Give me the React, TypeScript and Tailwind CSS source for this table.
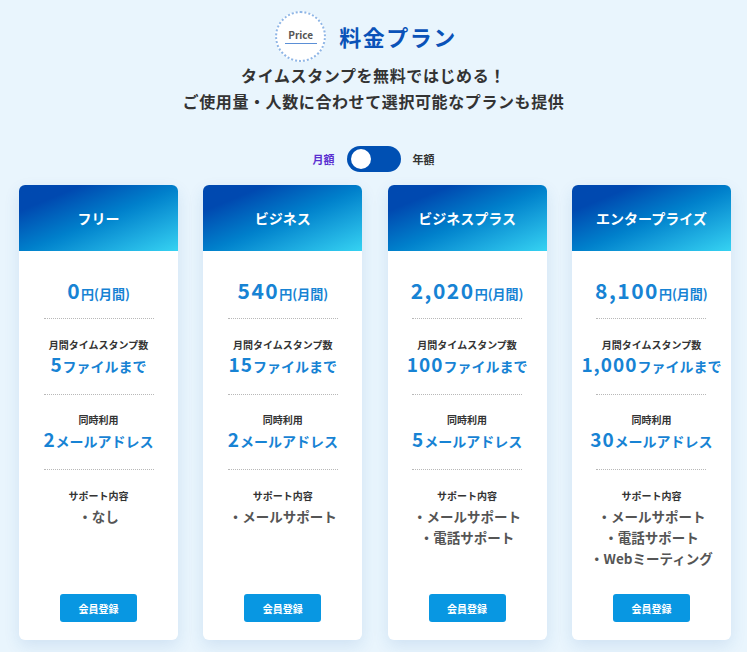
import React from "react";

type Plan = {
  name: string;
  price: string;
  files: string;
  mails: string;
  support: string[];
};

const plans: Plan[] = [
  { name: "フリー", price: "0", files: "5", mails: "2", support: ["なし"] },
  { name: "ビジネス", price: "540", files: "15", mails: "2", support: ["メールサポート"] },
  { name: "ビジネスプラス", price: "2,020", files: "100", mails: "5", support: ["メールサポート", "電話サポート"] },
  { name: "エンタープライズ", price: "8,100", files: "1,000", mails: "30", support: ["メールサポート", "電話サポート", "Webミーティング"] },
];

function Divider() {
  return <div className="mx-auto w-[110px] border-t border-dotted border-[#b8b8b8]" />;
}

function Card({ p }: { p: Plan }) {
  return (
    <div className="flex w-[159px] h-[455px] flex-col overflow-hidden rounded-[6px] bg-white shadow-[0_6px_16px_rgba(30,100,170,0.12)]">
      <div className="flex h-[66px] items-center justify-center bg-linear-to-br from-[#0049b0] from-20% to-[#36d3f2] text-[14px] font-bold text-white">
        {p.name}
      </div>
      <div className="flex flex-1 flex-col items-center pt-[24px] pb-[18px]">
        <div className="flex h-[28px] items-baseline justify-center text-[#1783d4] font-bold">
          <span className="text-[21px] tracking-[1.5px]">{p.price}</span>
          <span className="text-[13px]">円(月間)</span>
        </div>
        <div className="mt-[15px] w-full"><Divider /></div>
        <div className="mt-[19px] h-[14px] text-[10px] leading-[14px] font-bold text-[#333]">月間タイムスタンプ数</div>
        <div className="flex h-[24px] items-baseline text-[#1783d4] font-bold leading-[24px]">
          <span className="text-[19px] tracking-[1px]">{p.files}</span>
          <span className="text-[14px]">ファイルまで</span>
        </div>
        <div className="mt-[18px] w-full"><Divider /></div>
        <div className="mt-[18px] h-[14px] text-[10px] leading-[14px] font-bold text-[#333]">同時利用</div>
        <div className="flex h-[24px] items-baseline text-[#1783d4] font-bold leading-[24px]">
          <span className="text-[19px] tracking-[1px]">{p.mails}</span>
          <span className="text-[14px]">メールアドレス</span>
        </div>
        <div className="mt-[18px] w-full"><Divider /></div>
        <div className="mt-[19px] h-[14px] text-[10px] leading-[14px] font-bold text-[#333]">サポート内容</div>
        <div className="mt-[3px] flex flex-col items-center">
          {p.support.map((s) => (
            <div key={s} className="text-[13.5px] leading-[21px] font-bold text-[#555]">・{s}</div>
          ))}
        </div>
        <button className="mt-auto h-[28px] w-[77px] rounded-[3px] bg-[#0897e2] text-[10px] font-bold text-white">
          会員登録
        </button>
      </div>
    </div>
  );
}

export default function App() {
  return (
    <div
      className="min-h-[652px] w-full bg-[#e9f5fd]"
      style={{ fontFamily: '"Noto Sans CJK JP", "Noto Sans", sans-serif' }}
    >
      <div className="flex items-center justify-center gap-[13px] pt-[11px] pr-[15px]">
        <div className="relative flex h-[51px] w-[51px] items-center justify-center rounded-full border-2 border-dotted border-[#8fb6e6] bg-white">
          <div className="flex flex-col items-center">
            <span className="text-[10px] leading-[12px] font-bold text-[#555]">Price</span>
            <span className="mt-[2px] block h-[1px] w-[32px] bg-[#5b8fd6]" />
          </div>
        </div>
        <div className="text-[22px] font-bold tracking-[1.5px] text-[#0a52b8]">料金プラン</div>
      </div>
      <div className="flex flex-col items-center text-[16px] leading-[26px] font-bold text-[#333] tracking-[0.6px]">
        <div>タイムスタンプを無料ではじめる！</div>
        <div>ご使用量・人数に合わせて選択可能なプランも提供</div>
      </div>
      <div className="mt-[32px] flex items-center justify-center gap-[12px]">
        <span className="text-[11px] font-bold text-[#5a2fd0]">月額</span>
        <div className="flex h-[26px] w-[54px] items-center rounded-full bg-[#0050b3] px-[4px]">
          <div className="h-[20px] w-[20px] rounded-full bg-white" />
        </div>
        <span className="text-[11px] font-bold text-[#333]">年額</span>
      </div>
      <div className="mt-[13px] flex gap-[25.3px] pl-[19px]">
        {plans.map((p) => (
          <Card key={p.name} p={p} />
        ))}
      </div>
    </div>
  );
}
